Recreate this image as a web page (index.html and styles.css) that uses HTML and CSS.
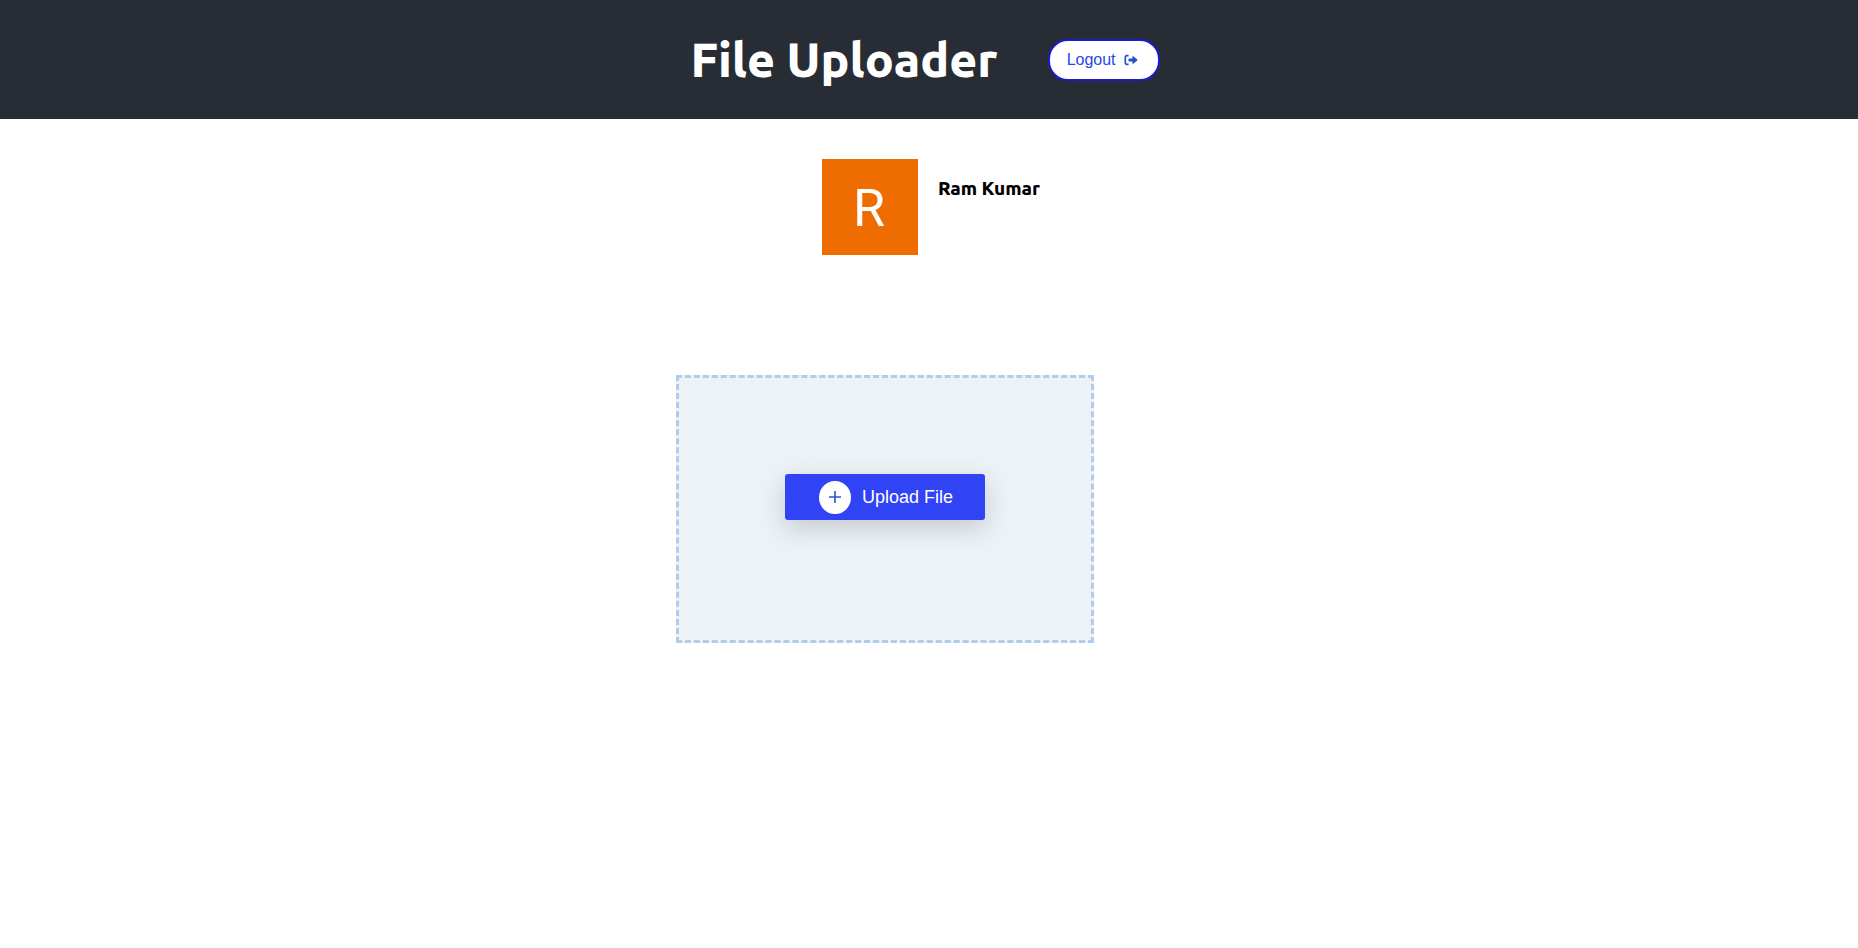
FILE: index.html
```html
<!DOCTYPE html>
<html lang="en">
<head>
<meta charset="utf-8">
<title>File Uploader</title>
<link rel="stylesheet" href="styles.css">
</head>
<body>
<header class="header">
  <h1 class="title">File Uploader</h1>
  <button class="logout" type="button">Logout
    <svg class="logout-icon" viewBox="0 0 14 12" aria-hidden="true">
      <path d="M4.6 1.7H2.6Q1.3 1.7 1.3 3V9Q1.3 10.3 2.6 10.3H4.6" fill="none" stroke="currentColor" stroke-width="1.7"/>
      <path d="M5 4.6H8.4V2.6Q8.6 1.9 9.3 2.3L13.3 5.6Q13.6 6 13.3 6.4L9.3 9.7Q8.6 10.1 8.4 9.4V7.4H5Q4.5 7.4 4.5 6.9V5.1Q4.5 4.6 5 4.6Z" fill="currentColor"/>
    </svg>
  </button>
</header>
<main>
  <section class="profile">
    <div class="avatar">R</div>
    <h3 class="name">Ram Kumar</h3>
  </section>
  <section class="upload">
    <div class="dropzone">
      <button class="upload-button" type="button">
        <span class="plus">
          <svg class="plus-icon" viewBox="0 0 12 12" aria-hidden="true"><path d="M6 0V12M0 6H12" stroke="currentColor" stroke-width="1.6"/></svg>
        </span>
        Upload File
      </button>
    </div>
  </section>
</main>
</body>
</html>
```
FILE: styles.css
```css
* {
  box-sizing: border-box;
}

body {
  margin: 0;
  background: #fff;
  font-family: Ubuntu, "Noto Sans", sans-serif;
}

.header {
  display: flex;
  justify-content: center;
  align-items: center;
  gap: 50px;
  padding: 30px 8px 29px 0;
  background: #282c34;
}

.title {
  margin: 0;
  padding-bottom: 2px;
  color: #fff;
  font-size: 48px;
  font-weight: 800;
  line-height: 58px;
}

.logout {
  display: flex;
  align-items: center;
  gap: 8px;
  height: 42px;
  padding: 0 20px 0 17px;
  border: 2px solid #1c1ccd;
  border-radius: 20px;
  background: #fff;
  color: #2548ea;
  font: 16px "Liberation Sans", Arial, sans-serif;
}

.logout-icon {
  width: 14px;
  height: 12px;
  color: #2450d8;
}

.profile {
  display: flex;
  justify-content: center;
  gap: 20px;
  padding: 40px 0 0 4px;
}

.avatar {
  display: flex;
  justify-content: center;
  align-items: center;
  width: 96px;
  height: 96px;
  padding: 2px 2px 0 0;
  background: #ef6c00;
  color: #fff;
  font: 52px Roboto, sans-serif;
}

.name {
  margin: 17px 0 0;
  color: #000;
  font-size: 19px;
  font-weight: 800;
  line-height: 24px;
}

.upload {
  display: flex;
  justify-content: center;
  padding: 120px 88px 0 0;
}

.dropzone {
  padding: 96px 106px 120px;
  border: 3px dashed #b1cde9;
  background: #ecf2f6;
}

.upload-button {
  display: flex;
  justify-content: center;
  align-items: center;
  gap: 11px;
  width: 200px;
  height: 46px;
  padding: 0 0 0 2px;
  border: 0;
  border-radius: 3px;
  background: #3043f5;
  box-shadow: 0 8px 24px rgba(40, 44, 52, 0.2);
  color: #fff;
  font: 18px "Liberation Sans", Arial, sans-serif;
}

.plus {
  display: flex;
  justify-content: center;
  align-items: center;
  width: 32px;
  height: 33px;
  border-radius: 50%;
  background: #fff;
  color: #2b50d4;
}

.plus-icon {
  width: 12px;
  height: 12px;
}
```
